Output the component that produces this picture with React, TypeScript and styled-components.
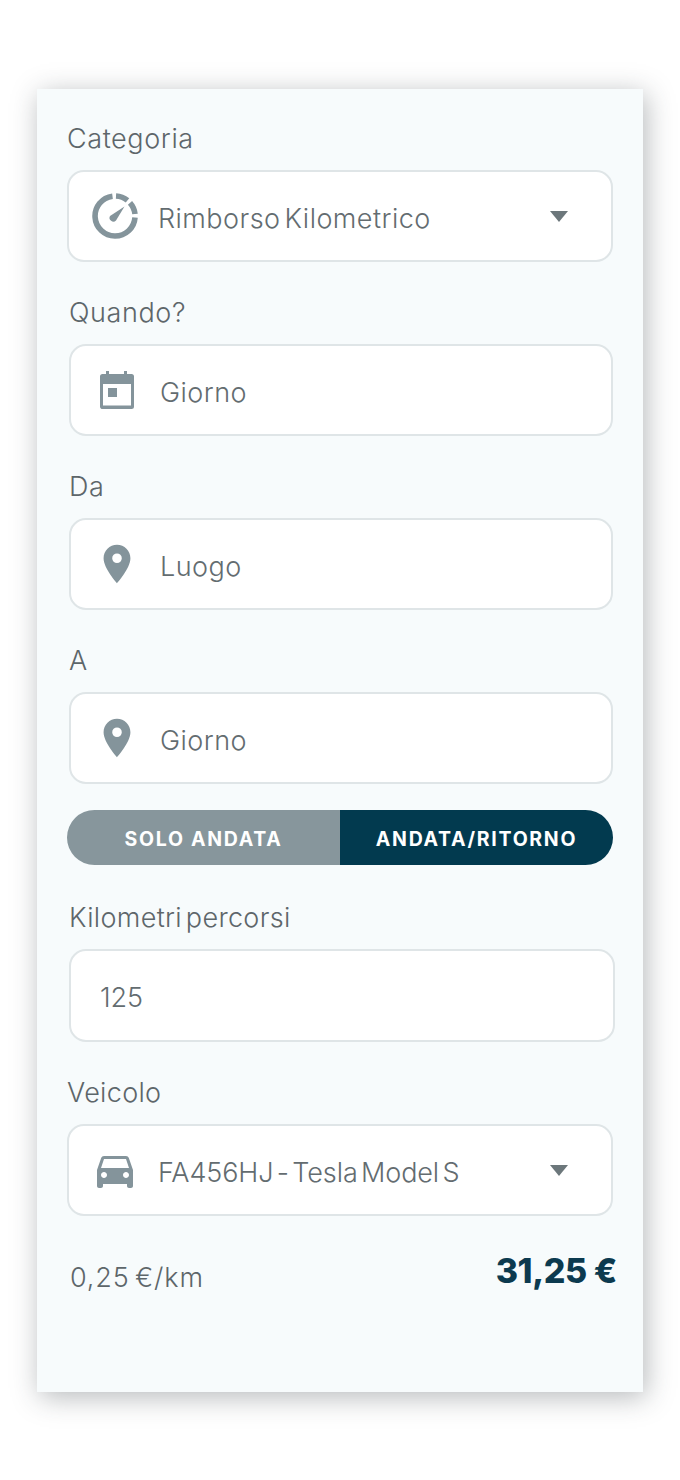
import React from "react";
import styled, { createGlobalStyle } from "styled-components";
import { MdDirectionsCar, MdLocationOn } from "react-icons/md";

const Global = createGlobalStyle`
  html, body { margin: 0; padding: 0; background: #fff; }
  body { font-family: Inter, "Liberation Sans", sans-serif; }
`;

const Page = styled.div`
  width: 680px;
  height: 1480px;
  padding: 89px 37px 0;
  box-sizing: border-box;
`;

const Panel = styled.div`
  width: 606px;
  height: 1303px;
  box-sizing: border-box;
  padding-top: 31px;
  background: #f7fbfc;
  box-shadow: 3px 5px 26px rgba(40, 50, 55, 0.34);
  display: flex;
  flex-direction: column;
`;

const Group = styled.div<{ $left: number; $right: number; $top: number }>`
  margin: ${(p) => p.$top}px ${(p) => p.$right}px 0 ${(p) => p.$left}px;
`;

const Label = styled.div<{ $tight?: boolean }>`
  height: 36px;
  line-height: 36px;
  padding-top: 1px;
  margin-bottom: 13px;
  font-size: 27px;
  font-weight: 300;
  letter-spacing: ${(p) => (p.$tight ? 0.32 : 0.6)}px;
  word-spacing: -4px;
  color: #5d666a;
`;

const Field = styled.div<{ $height?: number }>`
  height: ${(p) => p.$height ?? 92}px;
  box-sizing: border-box;
  display: flex;
  align-items: center;
  padding-left: 21px;
  padding-right: 43px;
  background: #fff;
  border: 2px solid #dfe5e7;
  border-radius: 17px;
`;

const IconSlot = styled.div`
  width: 50px;
  margin-right: 18px;
  flex: none;
  display: flex;
  align-items: center;
  justify-content: center;
  color: #84949b;
`;

const Value = styled.div<{ $flush?: boolean; $tight?: boolean }>`
  flex: 1;
  margin-left: ${(p) => (p.$flush ? 8 : 0)}px;
  padding-top: 4px;
  font-size: 27px;
  font-weight: 300;
  letter-spacing: ${(p) => (p.$tight ? -0.1 : 0.45)}px;
  word-spacing: ${(p) => (p.$tight ? -4.1 : -4)}px;
  color: #636c70;
  white-space: nowrap;
`;

const Caret = styled.div`
  width: 0;
  height: 0;
  border-left: 9px solid transparent;
  border-right: 9px solid transparent;
  border-top: 11px solid #6c777b;
`;

const Toggle = styled.div`
  margin: 26px 30px 0 30px;
  height: 55px;
  display: flex;
  border-radius: 28px;
  overflow: hidden;
`;

const ToggleOption = styled.div<{ $active?: boolean }>`
  flex: 1;
  display: flex;
  align-items: center;
  justify-content: center;
  padding-top: 3px;
  background: ${(p) => (p.$active ? "#023a4f" : "#87969c")};
  color: #fff;
  font-size: 19.5px;
  font-weight: 700;
  letter-spacing: 1.7px;
`;

const Footer = styled.div`
  margin: 34px 26px 0 33px;
  display: flex;
  justify-content: space-between;
  align-items: flex-start;
`;

const Rate = styled.div`
  margin-top: 11px;
  font-size: 27px;
  font-weight: 300;
  letter-spacing: 0.85px;
  word-spacing: -3px;
  color: #5d666a;
`;

const Total = styled.div`
  font-size: 34px;
  font-weight: 800;
  letter-spacing: -0.4px;
  color: #0c3a4f;
`;

const GaugeIcon = () => (
  <svg width="46" height="46" viewBox="0 0 46 46" fill="none" stroke="currentColor" strokeWidth="5.6">
    <path d="M43 24.500 A20 20 0 1 1 20.500 3.200" />
    <path d="M24 3 A20 20 0 0 1 35.500 7.400" />
    <path d="M38 9.800 A20 20 0 0 1 43 21" />
    <path d="M32.500 13.500 L24 27.500 A3.800 3.800 0 0 1 18 23 Z" fill="currentColor" stroke="none" />
  </svg>
);

const CalendarIcon = () => (
  <svg width="36" height="40" viewBox="0 0 36 40" fill="currentColor">
    <path
      fillRule="evenodd"
      d="M7 1h3v3h15V1h3v3h4.500a2.500 2.500 0 0 1 2.500 2.500v30a2.500 2.500 0 0 1-2.500 2.500h-30A2.500 2.500 0 0 1 1 36.500v-30A2.500 2.500 0 0 1 3.500 4H7zM4 14v21.500h28V14z"
    />
    <rect x="9" y="18" width="9" height="9" />
  </svg>
);

type RowProps = {
  left: number;
  right: number;
  top: number;
  label: string;
  value: string;
  icon?: React.ReactNode;
  caret?: boolean;
  height?: number;
  tight?: boolean;
};

const Row = ({ left, right, top, label, value, icon, caret, height, tight }: RowProps) => (
  <Group $left={left} $right={right} $top={top}>
    <Label $tight={tight}>{label}</Label>
    <Field $height={height}>
      {icon && <IconSlot>{icon}</IconSlot>}
      <Value $flush={!icon} $tight={tight}>{value}</Value>
      {caret && <Caret />}
    </Field>
  </Group>
);

export default function App() {
  return (
    <Page>
      <Global />
      <Panel>
        <Row left={30} right={30} top={0} label="Categoria" value="Rimborso Kilometrico" icon={<GaugeIcon />} caret />
        <Row left={32} right={30} top={32} label="Quando?" value="Giorno" icon={<CalendarIcon />} />
        <Row left={32} right={30} top={32} label="Da" value="Luogo" icon={<MdLocationOn size={46} />} />
        <Row left={32} right={30} top={32} label="A" value="Giorno" icon={<MdLocationOn size={46} />} />
        <Toggle>
          <ToggleOption>SOLO ANDATA</ToggleOption>
          <ToggleOption $active>ANDATA/RITORNO</ToggleOption>
        </Toggle>
        <Row left={32} right={28} top={34} label="Kilometri percorsi" value="125" height={93} tight />
        <Row left={30} right={30} top={32} label="Veicolo" value="FA456HJ - Tesla Model S" icon={<MdDirectionsCar size={48} />} caret tight />
        <Footer>
          <Rate>0,25 €/km</Rate>
          <Total>31,25 €</Total>
        </Footer>
      </Panel>
    </Page>
  );
}
